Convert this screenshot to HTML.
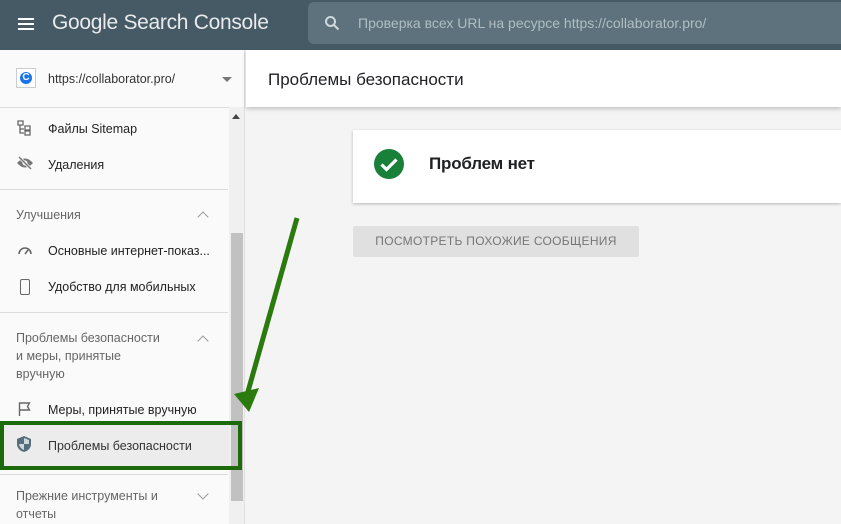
<!DOCTYPE html>
<html><head><meta charset="utf-8"><style>
*{margin:0;padding:0;box-sizing:border-box}
body{width:841px;height:524px;overflow:hidden;font-family:"Liberation Sans",sans-serif;background:#f4f4f4;position:relative}
.top{position:absolute;left:0;top:0;width:841px;height:50px;background:#455a64}
.search{position:absolute;left:308px;top:2px;width:560px;height:42px;background:#5d727c;border-radius:6px;color:#b0bec5;font-size:14px;line-height:42px;padding-left:50px}
.side{position:absolute;left:0;top:50px;width:245px;height:474px;background:#fafafa;border-right:1px solid #e0e0e0}
.it{position:absolute;left:48px;font-size:12.5px;color:#222}
.sec{position:absolute;left:16px;font-size:12.5px;color:#666;line-height:18px}
.hr{position:absolute;left:0;width:228px;height:1px;background:#ddd}
.sb{position:absolute;left:229px;top:107px;width:15px;height:417px;background:#f0f0f0}
.thumb{position:absolute;left:231px;top:233px;width:12px;height:268px;background:#c1c1c1}
.chev{position:absolute;left:199px;width:8px;height:8px;border-left:1.5px solid #999;border-top:1.5px solid #999}
</style></head><body>
<div class="top">
<div style="position:absolute;left:18px;top:18px;width:16px;height:2px;background:#fff;box-shadow:0 5px #fff,0 10px #fff"></div>
<div style="position:absolute;left:52px;top:11px;color:#e8eaed;font-size:21px;letter-spacing:-0.3px">Google Search Console</div>
<div class="search">Проверка всех URL на ресурсе https://collaborator.pro/
<svg style="position:absolute;left:16px;top:13px" width="16" height="16" viewBox="0 0 16 16"><circle cx="6.5" cy="6.5" r="4.5" fill="none" stroke="#cfd8dc" stroke-width="2"/><path d="M10 10l4.5 4.5" stroke="#cfd8dc" stroke-width="2"/></svg></div>
</div>
<div class="side">
<div style="position:absolute;left:16px;top:18px;width:20px;height:20px;border:1px solid #ccc;background:#fff"><div style="margin:3px;width:12px;height:12px;border-radius:50%;background:#1a73e8;color:#fff;font-size:10px;font-weight:bold;text-align:center;line-height:12px">C</div></div>
<div style="position:absolute;left:48px;top:22px;font-size:12.5px;color:#333">https://collaborator.pro/</div>
<div style="position:absolute;left:222px;top:27px;border:5px solid transparent;border-top-color:#777"></div>
<div class="hr" style="top:57px;width:245px"></div>
<svg style="position:absolute;left:17px;top:70px" width="15" height="16"><path d="M1 1h5v4H1zM3 5v8h4M3 9h4M8 6h5v4H8zM8 11h5v4H8z" fill="none" stroke="#666" stroke-width="1.3"/></svg>
<div class="it" style="top:72px">Файлы Sitemap</div>
<svg style="position:absolute;left:16px;top:106px" width="18" height="14"><path d="M1 7q8-9 16 0q-8 9-16 0z" fill="#777"/><circle cx="9" cy="7" r="2.5" fill="#fafafa"/><path d="M3 1l12 12" stroke="#fafafa" stroke-width="3"/><path d="M3 1l12 12" stroke="#777" stroke-width="1.5"/></svg>
<div class="it" style="top:108px">Удаления</div>
<div class="hr" style="top:139px"></div>
<div class="sec" style="top:156px">Улучшения</div><div class="chev" style="top:163px;transform:rotate(45deg)"></div>
<svg style="position:absolute;left:17px;top:194px" width="16" height="12"><path d="M2 10a6 6 0 1 1 12 0" fill="none" stroke="#666" stroke-width="1.6"/><path d="M8 10l3-4" stroke="#666" stroke-width="1.6"/></svg>
<div class="it" style="top:194px">Основные интернет-показ...</div>
<div style="position:absolute;left:20px;top:229px;width:10px;height:16px;border:1.6px solid #666;border-radius:2px"></div>
<div class="it" style="top:230px">Удобство для мобильных</div>
<div class="hr" style="top:262px"></div>
<div class="sec" style="top:279px">Проблемы безопасности<br>и меры, принятые<br>вручную</div><div class="chev" style="top:287px;transform:rotate(45deg)"></div>
<svg style="position:absolute;left:18px;top:351px" width="14" height="16"><path d="M1.5 15V2h10l-2 3.5 2 3.5h-10" fill="none" stroke="#666" stroke-width="1.4"/></svg>
<div class="it" style="top:353px">Меры, принятые вручную</div>
<div style="position:absolute;left:0;top:374px;width:238px;height:44px;background:#ececec"></div>
<svg style="position:absolute;left:17px;top:386px" width="14" height="16"><path d="M7 0L0 3v5c0 4 3 7 7 8 4-1 7-4 7-8V3z" fill="#546e7a"/><path d="M7 2L12 4v4H7zM7 8v6c-2.5-.8-4.5-3-5-6z" fill="#cfd8dc"/></svg>
<div class="it" style="top:389px;color:#333">Проблемы безопасности</div>
<div class="hr" style="top:424px"></div>
<div class="sec" style="top:437px">Прежние инструменты и<br>отчеты</div><div class="chev" style="top:440px;transform:rotate(225deg)"></div>
</div>
<div class="sb"></div><div class="thumb"></div>
<div style="position:absolute;left:232px;top:114px;border:4px solid transparent;border-bottom:5px solid #444;border-top:0"></div>
<div style="position:absolute;left:0;top:421px;width:242px;height:49px;border:4px solid #1c6a0a"></div>
<div style="position:absolute;left:246px;top:50px;width:595px;height:57px;background:#fff;box-shadow:0 2px 4px rgba(0,0,0,.2)"></div>
<div style="position:absolute;left:268px;top:70px;font-size:17px;color:#202124">Проблемы безопасности</div>
<div style="position:absolute;left:353px;top:130px;width:488px;height:73px;background:#fff;box-shadow:0 1px 3px rgba(0,0,0,.25)"></div>
<svg style="position:absolute;left:373px;top:148px" width="32" height="32"><circle cx="16" cy="16" r="15" fill="#188038"/><path d="M8.5 16.5l5 5 10-10" fill="none" stroke="#fff" stroke-width="3.2"/></svg>
<div style="position:absolute;left:429px;top:154px;font-size:17px;color:#202124;font-weight:bold;letter-spacing:-.2px">Проблем нет</div>
<div style="position:absolute;left:353px;top:226px;width:286px;height:31px;background:#e0e0e0;border-radius:2px;color:#757575;font-size:12px;text-align:center;line-height:31px;letter-spacing:.3px">ПОСМОТРЕТЬ ПОХОЖИЕ СООБЩЕНИЯ</div>
<svg style="position:absolute;left:0;top:0" width="841" height="524"><path d="M297 218L247 395" stroke="#2a7a0e" stroke-width="5"/><path d="M234 394l15 18 10-24z" fill="#2a7a0e"/></svg>
</body></html>
